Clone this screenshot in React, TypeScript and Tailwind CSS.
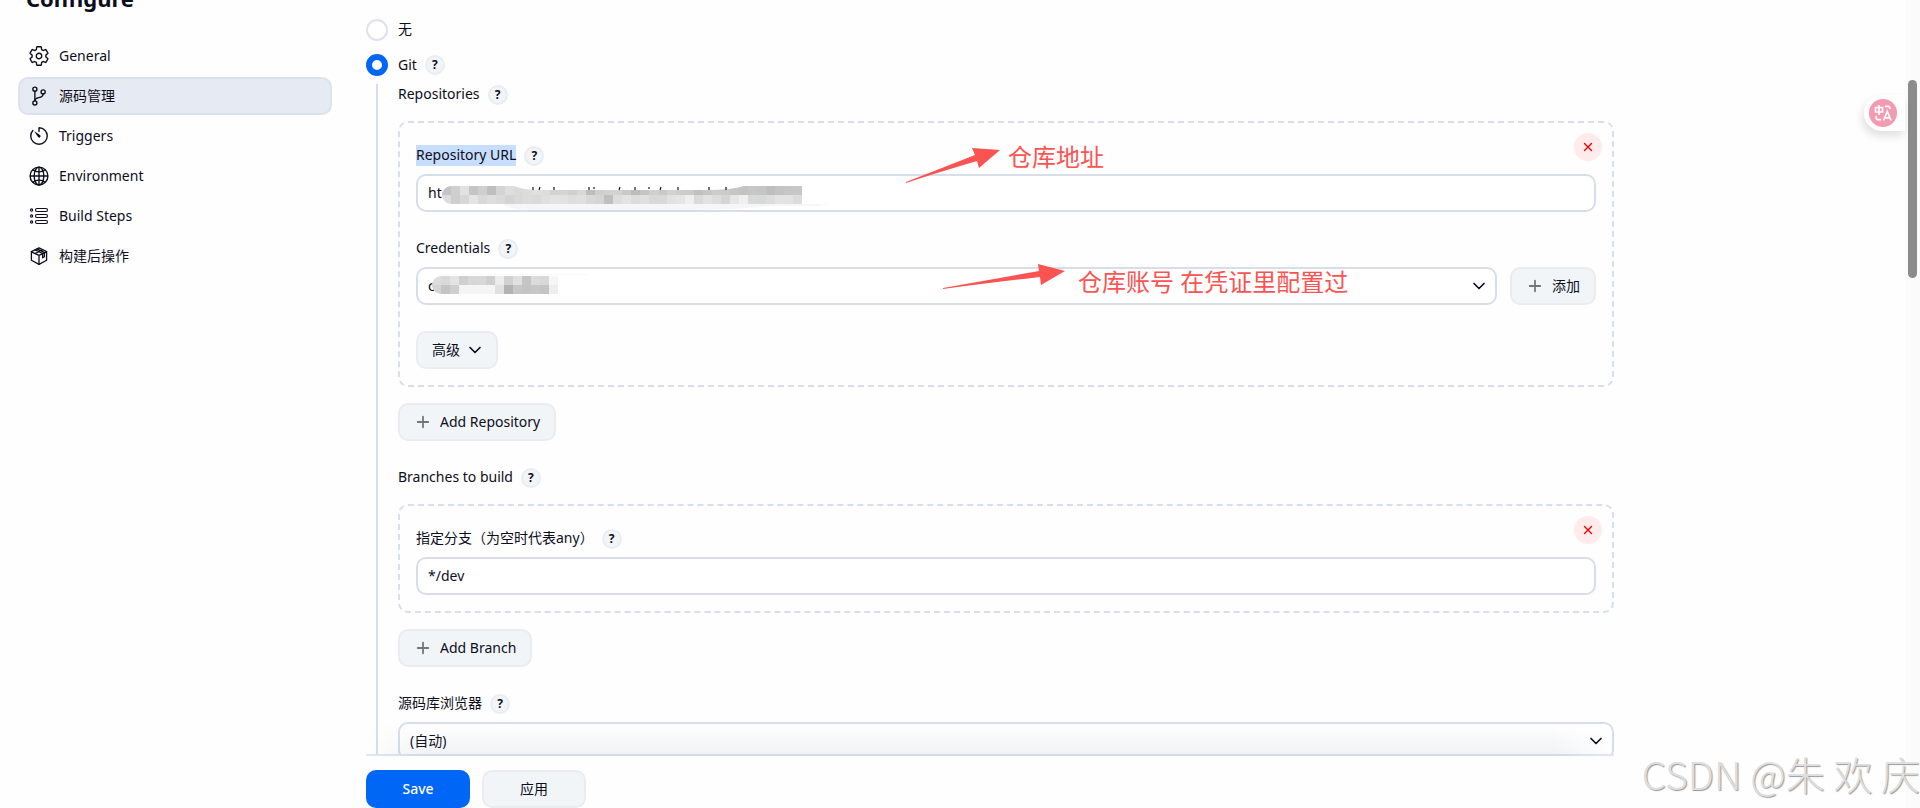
import type { ReactNode } from 'react';
import { ChevronDown, Plus, X } from 'lucide-react';
import { IoGitBranchOutline, IoGlobeOutline, IoSettingsOutline, IoTimerOutline } from 'react-icons/io5';

const StepsIcon = () => (
  <svg viewBox="0 0 22 22" className="w-[22px] h-[22px]" fill="none" stroke="currentColor" strokeWidth="1.1">
    {[5, 11, 17].map((y) => (
      <g key={y}>
        <circle cx="3.6" cy={y} r="1.1" />
        <rect x="7.5" y={y - 1.5} width="12" height="3" rx="1.5" />
      </g>
    ))}
  </svg>
);

const PackageIcon = () => (
  <svg viewBox="0 0 22 22" className="w-[22px] h-[22px]" fill="none" stroke="currentColor" strokeWidth="1.3" strokeLinejoin="round" strokeLinecap="round">
    <path d="M11 2.8 18.6 6.6v8.6L11 19.4 3.4 15.2V6.6z" />
    <path d="M3.4 6.8 11 10.4l7.6-3.6M11 10.4v9" />
    <path d="M7.2 4.8 14.6 8.5v4.3l1.8-1V7.6L9.2 3.9M7.2 8.5l3.6-1.8 3.6-1.8" />
  </svg>
);

const navItems: { label: string; icon: ReactNode; active?: boolean }[] = [
  { label: 'General', icon: <IoSettingsOutline className="w-[22px] h-[22px]" /> },
  { label: '源码管理', icon: <IoGitBranchOutline className="w-[22px] h-[22px]" />, active: true },
  { label: 'Triggers', icon: <IoTimerOutline className="w-[22px] h-[22px]" /> },
  { label: 'Environment', icon: <IoGlobeOutline className="w-[22px] h-[22px]" /> },
  { label: 'Build Steps', icon: <StepsIcon /> },
  { label: '构建后操作', icon: <PackageIcon /> },
];

const fieldClass =
  'block w-full h-[38px] rounded-[10px] border-2 border-[#d7deea] bg-white px-[10px] pb-[2px] outline-none appearance-none';
const buttonClass =
  'flex items-center justify-center h-[38px] rounded-[10px] border-2 border-[#e9edf2] bg-[#f1f5f8]';
const radioClass =
  'appearance-none w-[22px] h-[22px] rounded-full border-2 border-[#dde2ec] bg-white checked:border-[6px] checked:border-[#0066f5]';

function Help() {
  return (
    <button
      type="button"
      aria-label="Help"
      className="flex items-center justify-center w-5 h-5 shrink-0 rounded-full border-2 border-[#e9edf2] bg-[#f1f5f8] text-xs leading-none font-bold"
    >
      ?
    </button>
  );
}

function FieldLabel({ text, htmlFor, selected }: { text: string; htmlFor?: string; selected?: boolean }) {
  return (
    <div className="flex items-center gap-2 h-[21px]">
      <label htmlFor={htmlFor} className={`pb-[2px] ${selected ? 'bg-[#c8deff]' : ''}`}>
        {text}
      </label>
      <Help />
    </div>
  );
}

function Chunk({ children }: { children: ReactNode }) {
  return (
    <div className="relative mt-4 rounded-[10px] border-2 border-dashed border-[#d7e0ea] px-4 pt-[22px] pb-4">
      <button
        type="button"
        aria-label="Delete"
        className="absolute right-[10px] top-[10px] flex items-center justify-center w-7 h-7 rounded-full bg-[#ffebeb] text-[#f00000]"
      >
        <X className="w-[14px] h-[14px]" strokeWidth={2.4} />
      </button>
      {children}
    </div>
  );
}

function SelectField({ id, value }: { id: string; value: string }) {
  return (
    <div className="relative flex-1">
      <select id={id} className={fieldClass}>
        <option>{value}</option>
      </select>
      <ChevronDown className="absolute right-2 top-[9px] w-5 h-5 pointer-events-none" strokeWidth={2} />
    </div>
  );
}

function AddButton({ label }: { label: string }) {
  return (
    <button type="button" className={`${buttonClass} gap-2 px-[14px]`}>
      <Plus className="w-[18px] h-[18px] text-[#73767c]" strokeWidth={2.4} />
      <span className="pb-[2px]">{label}</span>
    </button>
  );
}

// grey level per 9px cell, first row then second row
const urlCells = [
  'c4 cf e2 c5 cf bf d4 de da dc e0 dd d3 d5 d0 d8 bd cf d2 d3 ca bc c4 d0 ca d2 cd cb c0 c6 cc cb c6 c3 c7 c5 be c3 c6 c7'.split(' '),
  'dc ce d7 e4 d9 de da d4 d9 dc da df e3 e2 de df d8 d5 bf dd e3 dc e0 d8 d9 e2 e5 ef da e2 dd d5 e6 f0 d9 d8 dd e3 e2 dc'.split(' '),
];
const credentialCells = [
  'dd d9 e4 cf d7 d8 cf ec d1 e0 c5 db d8 f6'.split(' '),
  'd4 c4 cf f5 f5 f5 f5 e1 b3 c7 c4 c7 c4 ee'.split(' '),
];

function Mosaic({ cells }: { cells: string[][] }) {
  return (
    <g>
      {cells.map((row, y) =>
        row.map((c, x) => <rect key={`${x}-${y}`} x={x * 9} y={y * 9} width="9" height="9" fill={`#${c}${c}${c}`} />),
      )}
    </g>
  );
}

export default function App() {
  return (
    <div className="relative flex h-screen overflow-hidden bg-[#fefefe] text-[#0d0d1c] text-sm leading-[19px] font-['Noto_Sans','Noto_Sans_CJK_SC',sans-serif]">
      <aside className="w-[332px] shrink-0 pl-[18px]">
        <h1 className="-mt-[18px] mb-[23px] pl-2 text-[22px] leading-8 font-bold">Configure</h1>
        <nav className="flex flex-col gap-[2px]">
          {navItems.map((item) => (
            <a
              key={item.label}
              href="#"
              className={`flex items-center gap-[9px] h-[38px] px-2 rounded-[10px] border-2 ${
                item.active ? 'bg-[#e6eaf2] border-[#dde2ec]' : 'border-transparent'
              }`}
            >
              {item.icon}
              <span className="pb-[2px]">{item.label}</span>
            </a>
          ))}
        </nav>
      </aside>

      <main className="flex flex-col flex-1 min-w-0 max-w-[1248px] ml-[34px]">
        <form className="flex-1 min-h-0 overflow-hidden pt-[19px]">
          <div className="flex items-center gap-[10px] h-[22px]">
            <input id="scm-none" type="radio" name="scm" className={radioClass} />
            <label htmlFor="scm-none" className="pb-[3px]">无</label>
          </div>
          <div className="flex items-center gap-[10px] h-[22px] mt-[13px]">
            <input id="scm-git" type="radio" name="scm" defaultChecked className={radioClass} />
            <FieldLabel text="Git" htmlFor="scm-git" />
          </div>

          <div className="mt-2 ml-[10px] pl-5 border-l-2 border-[#d7deea]">
            <FieldLabel text="Repositories" />
            <Chunk>
              <FieldLabel text="Repository URL" htmlFor="repo-url" selected />
              <div className="relative mt-2">
                <input id="repo-url" type="text" defaultValue="ht" className={fieldClass} />
                <svg className="absolute left-[26px] top-3 pointer-events-none" width="400" height="24" fill="none">
                  <defs>
                    <clipPath id="url-smudge">
                      <path d="M9 0H72Q82 4 96 4H265Q290 4 302 0H360V18H9A9 9 0 0 1 9 0Z" />
                    </clipPath>
                  </defs>
                  <path d="M60 18H386L378 20H330Q290 24 250 24H90Q70 24 60 18Z" fill="#f4f6fa" />
                  <g clipPath="url(#url-smudge)">
                    <Mosaic cells={urlCells} />
                  </g>
                  <path
                    d="M91 1v3M98 1l-1 3M112 1v3M147 1v3M152 1v2M178 1l-1 3M193 1v3M207 1v2M219 1l-1 3M236 1v3M267 1v3M284 1v3"
                    stroke="#14141f"
                    strokeWidth="1.2"
                  />
                </svg>
                <svg className="absolute left-[490px] -top-[26px] pointer-events-none" width="96" height="36" fill="#fb5352">
                  <path d="M0 34 69 7 66 0 94 2 73 20 71 13 Q30 25 0 35z" />
                </svg>
                <span className="absolute left-[592px] -top-[33px] text-2xl text-[#fb5352]">仓库地址</span>
              </div>

              <div className="mt-[26px]">
                <FieldLabel text="Credentials" htmlFor="credentials" />
              </div>
              <div className="relative flex gap-[13px] mt-2">
                <SelectField id="credentials" value="c" />
                <AddButton label="添加" />
                <svg className="absolute left-4 top-[7px] pointer-events-none" width="160" height="20" fill="none">
                  <defs>
                    <clipPath id="credential-smudge">
                      <path d="M9 0H127V18H9A9 9 0 0 1 9 0Z" />
                    </clipPath>
                  </defs>
                  <path d="M8 0H155" stroke="#f1f3f8" />
                  <g clipPath="url(#credential-smudge)" transform="translate(0 2)">
                    <Mosaic cells={credentialCells} />
                  </g>
                </svg>
                <svg className="absolute left-[527px] -top-[3px] pointer-events-none" width="124" height="26" fill="#fb5352">
                  <path d="M0 24 96 7 95 0 122 7 98 21 97 13 Q45 19 0 25z" />
                </svg>
                <span className="absolute left-[662px] -top-px text-2xl text-[#fb5352]">仓库账号 在凭证里配置过</span>
              </div>

              <button type="button" className={`${buttonClass} gap-[5px] mt-[26px] pl-[14px] pr-[11px]`}>
                <span className="pb-[2px]">高级</span>
                <ChevronDown className="w-5 h-5" strokeWidth={2} />
              </button>
            </Chunk>
            <div className="flex mt-4 mb-[26px]">
              <AddButton label="Add Repository" />
            </div>

            <FieldLabel text="Branches to build" />
            <Chunk>
              <FieldLabel text="指定分支（为空时代表any）" htmlFor="branch" />
              <div className="mt-2">
                <input id="branch" type="text" defaultValue="*/dev" className={fieldClass} />
              </div>
            </Chunk>
            <div className="flex mt-4 mb-[26px]">
              <AddButton label="Add Branch" />
            </div>

            <FieldLabel text="源码库浏览器" htmlFor="browser" />
            <div className="flex mt-2">
              <SelectField id="browser" value="(自动)" />
            </div>
          </div>
        </form>

        <footer className="relative shrink-0 flex gap-3 pt-[14px] border-t-2 border-[#e1e7f0] bg-[#fefefe]">
          <div className="absolute inset-x-0 bottom-full h-8 pointer-events-none bg-linear-to-t from-slate-500/10 to-transparent [mask-image:linear-gradient(to_right,transparent,black_60px,black_calc(100%-60px),transparent)]" />
          <button type="button" className="w-[104px] h-[38px] pb-[2px] rounded-[10px] bg-[#0066f5] text-white font-medium">
            Save
          </button>
          <button type="button" className={`${buttonClass} w-[104px] pb-[2px]`}>
            应用
          </button>
        </footer>
      </main>

      {/* page scrollbar */}
      <div className="flex justify-center w-[15px] shrink-0 ml-auto pt-20 bg-[#fbfbfb]">
        <div className="w-[9px] h-[198px] rounded-full bg-[#8b8b8b]" />
      </div>

      <button
        type="button"
        aria-label="翻译"
        className="absolute right-[15px] top-[95px] flex items-center w-[41px] h-9 pl-[5px] rounded-l-full bg-white shadow-[-2px_5px_8px_rgba(0,0,0,0.12)]"
      >
        <svg viewBox="0 0 28 28" className="w-7 h-7" fill="none" stroke="white" strokeWidth="1.7">
          <circle cx="14" cy="14" r="14" fill="#f49ab1" stroke="none" />
          <path d="M6.5 8.5h7v4.5h-7zM10 6v10" />
          <path d="M16 7.3h3q2 0 2 2.7" />
          <path d="M7.2 17v1.4q0 2.3 2.3 2.3H12" />
          <path d="m14.5 21.5 3.8-9 3.7 9M16 18.8h4.5" />
        </svg>
      </button>

      <div className="absolute right-0 bottom-[15px] text-[39px] leading-10 font-light whitespace-nowrap text-[#dedede] [text-shadow:1px_1px_1px_#999] pointer-events-none font-['Noto_Sans_CJK_SC',sans-serif]">
        CSDN @朱 欢 庆
      </div>
    </div>
  );
}
